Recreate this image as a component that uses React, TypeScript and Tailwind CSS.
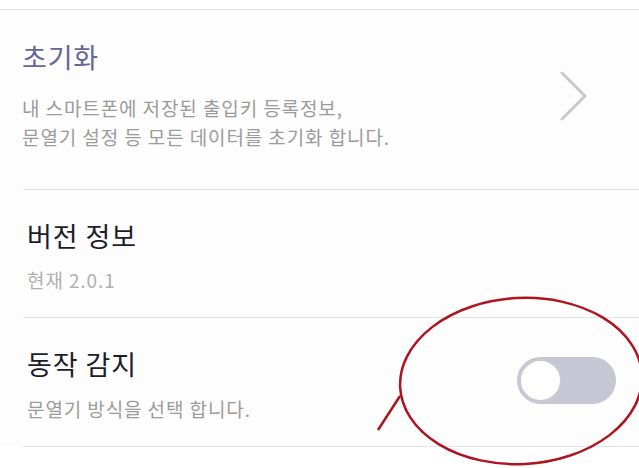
import React from "react";

const font = { fontFamily: '"Noto Sans CJK KR", "Noto Sans", sans-serif' };

function Toggle() {
  return (
    <div className="w-[99px] h-[47px] rounded-full bg-[#c6c6d4] flex items-center pl-[2px]">
      <div className="w-[43px] h-[43px] rounded-full bg-white border-[2px] border-[#c9c9d2]" />
    </div>
  );
}

export default function App() {
  return (
    <div
      className="relative w-[639px] h-[468px] overflow-hidden bg-white"
      style={font}
    >
      <div className="h-[9px] bg-white" />
      <div className="border-t border-[#e3e3e6] bg-[#fdfdfd]">
        {/* 초기화 */}
        <div className="flex items-center pl-[22px] pr-[50px] pt-[29px] pb-[38px]">
          <div className="flex-1 flex flex-col">
            <div className="text-[27px] leading-[36px] text-[#66669a] tracking-[0.8px]">
              초기화
            </div>
            <div className="mt-[18px] text-[19px] leading-[29px] text-[#9b9b9b] tracking-[0.9px]">
              <div>내 스마트폰에 저장된 출입키 등록정보,</div>
              <div>문열기 설정 등 모든 데이터를 초기화 합니다.</div>
            </div>
          </div>
          <svg width="30" height="50" viewBox="0 0 30 50" className="mt-[2px]">
            <path
              d="M3 2 L26 25 L3 48"
              fill="none"
              stroke="#c8c8d0"
              strokeWidth="3"
              strokeLinecap="round"
              strokeLinejoin="round"
            />
          </svg>
        </div>
        <div className="ml-[23px] border-t border-[#e3e3e6]" />
        {/* 버전 정보 */}
        <div className="flex flex-col pl-[27px] pt-[28px] pb-[23px]">
          <div className="text-[27px] leading-[36px] text-[#1c1c2a] tracking-[0.9px]">
            버전 정보
          </div>
          <div className="mt-[11px] text-[19px] leading-[29px] text-[#b0b0b0] tracking-[0.9px]">
            현재 2.0.1
          </div>
        </div>
        <div className="ml-[23px] border-t border-[#e3e3e6]" />
        {/* 동작 감지 */}
        <div className="flex items-center pl-[27px] pr-[23px] pt-[28px] pb-[23px]">
          <div className="flex-1 flex flex-col">
            <div className="text-[27px] leading-[36px] text-[#1c1c2a] tracking-[0.9px]">
              동작 감지
            </div>
            <div className="mt-[12px] text-[19px] leading-[29px] text-[#9b9b9b] tracking-[0.9px]">
              문열기 방식을 선택 합니다.
            </div>
          </div>
          <div className="mt-[-8px]">
            <Toggle />
          </div>
        </div>
        <div className="ml-[23px] border-t border-[#e3e3e6]" />
      </div>

      {/* red annotation */}
      <svg
        className="absolute left-0 top-0 pointer-events-none"
        width="639"
        height="468"
        viewBox="0 0 639 468"
      >
        <ellipse
          cx="521"
          cy="381"
          rx="121"
          ry="83"
          fill="none"
          stroke="#b0121f"
          strokeWidth="2.5"
          transform="rotate(-3 521 381)"
        />
        <path d="M400 396 L378 430" stroke="#b0121f" strokeWidth="2.5" fill="none" />
      </svg>
    </div>
  );
}
